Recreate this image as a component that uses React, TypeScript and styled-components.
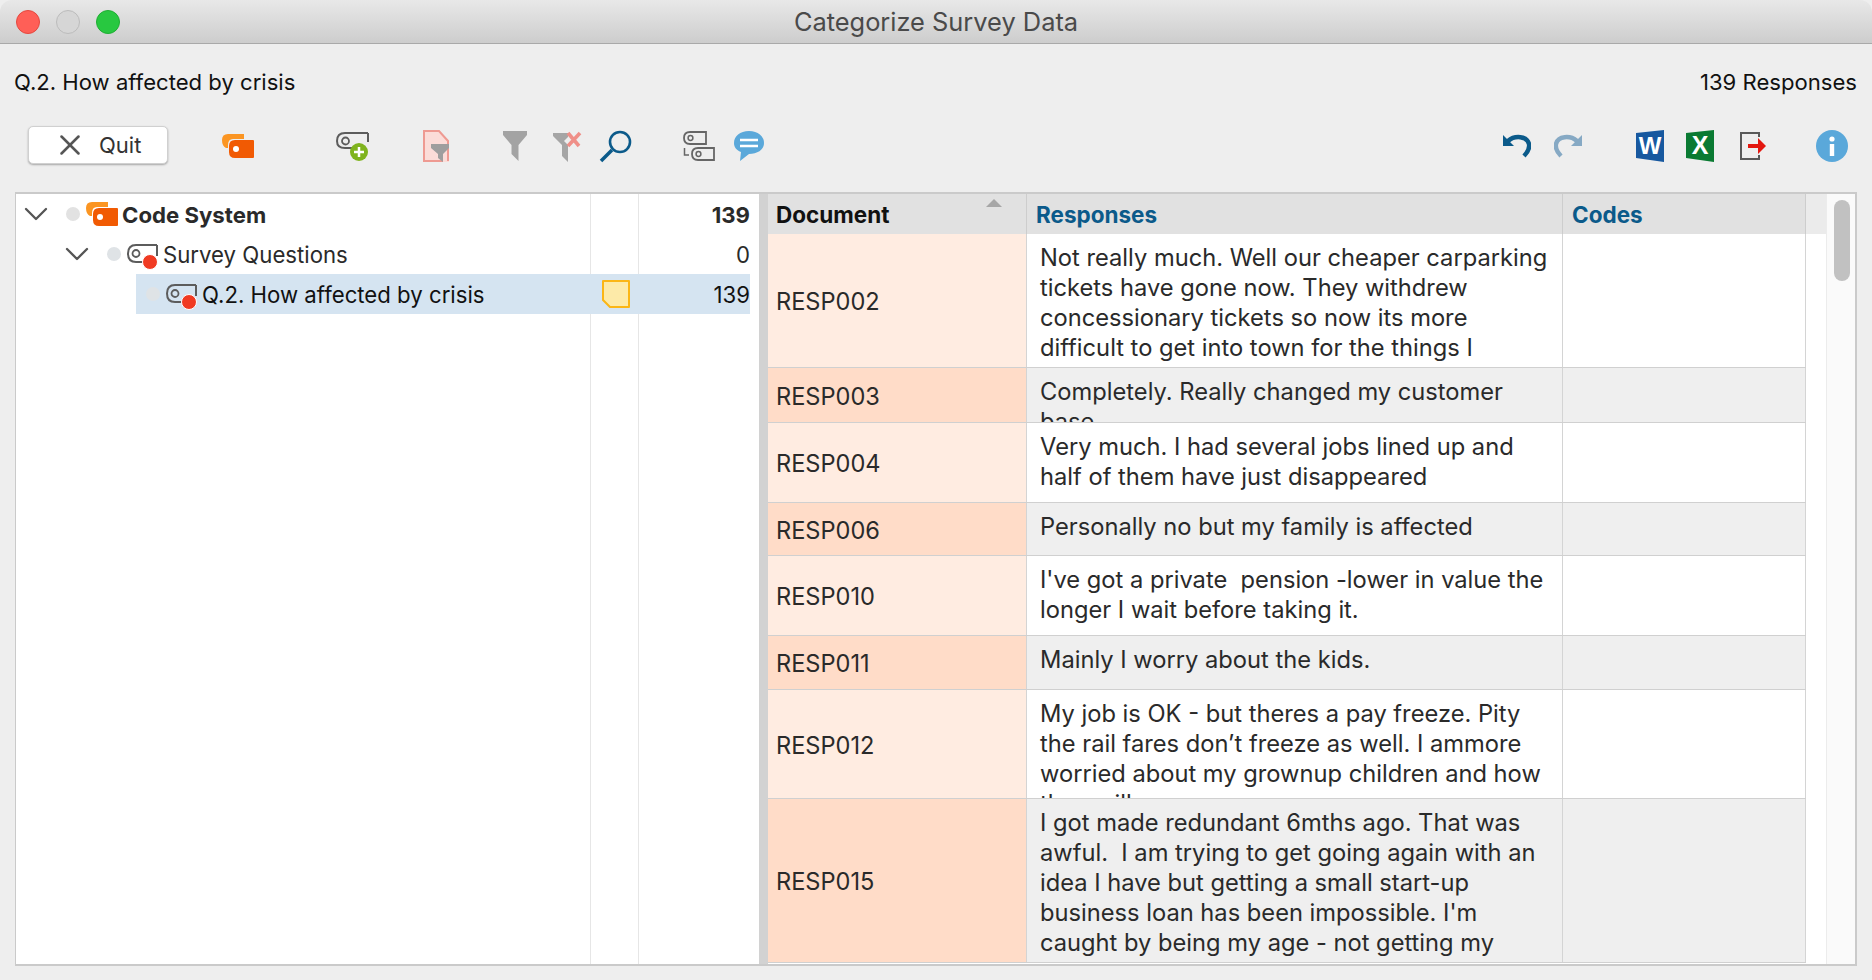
import { ReactNode } from 'react'
import styled, { createGlobalStyle } from 'styled-components'
import { X, ChevronDown } from 'lucide-react'

const GlobalStyle = createGlobalStyle`
    html, body {
        margin: 0;
        padding: 0;
        background: #eeeeee;
        font-family: Inter, "Liberation Sans", sans-serif;
        color: #222222;
    }
`

const Window = styled.div`
    width: 1872px;
    height: 980px;
    overflow: hidden;
    display: flex;
    flex-direction: column;
    background: #eeeeee;
`
const TitleBar = styled.div`
    height: 44px;
    flex: none;
    display: flex;
    align-items: center;
    justify-content: center;
    position: relative;
    box-sizing: border-box;
    background: linear-gradient(#e8e8e8, #cdcdcd);
    border-bottom: 1px solid #a9a9a9;
    border-radius: 12px 12px 0 0;
    font-size: 25.4px;
    color: #4a4a4a;
`
const Lights = styled.div`
    position: absolute;
    left: 16px;
    top: 10px;
    display: flex;
    gap: 16px;
`
const Light = styled.div<{ $color: string; $edge: string }>`
    width: 24px;
    height: 24px;
    border-radius: 50%;
    box-sizing: border-box;
    background: ${(p) => p.$color};
    border: 1px solid ${(p) => p.$edge};
`
const InfoRow = styled.div`
    height: 75px;
    flex: none;
    display: flex;
    align-items: center;
    justify-content: space-between;
    padding: 0 15px 0 14px;
    font-size: 22.1px;
    color: #111111;
`
const Toolbar = styled.div`
    height: 44px;
    margin-top: 4px;
    flex: none;
    display: flex;
    align-items: center;
    padding: 0 24px 0 28px;
`
const QuitButton = styled.button`
    width: 140px;
    height: 38px;
    box-sizing: border-box;
    display: flex;
    align-items: center;
    padding: 0 0 0 24px;
    gap: 12px;
    background: #ffffff;
    border: 1px solid #d0d0d0;
    border-radius: 5px;
    box-shadow: 0 1px 2px rgba(0, 0, 0, 0.3);
    font-family: inherit;
    font-size: 22px;
    color: #333333;
`
const Tool = styled.div<{ $left: number; $width: number }>`
    margin-left: ${(p) => p.$left}px;
    margin-top: 2px;
    width: ${(p) => p.$width}px;
    flex: none;
    display: flex;
    align-items: center;
    justify-content: center;
`
const Spacer = styled.div`
    flex: 1;
`
const Main = styled.div`
    margin: 25px 15px 0;
    height: 774px;
    flex: none;
    display: flex;
    box-sizing: border-box;
    border: 2px solid #cacaca;
    border-left-width: 1px;
    background: #ffffff;
`
const TreePanel = styled.div`
    width: 743px;
    flex: none;
    position: relative;
    background: #ffffff;
    padding-right: 9px;
    box-sizing: border-box;
`
const ColumnRule = styled.div<{ $left: number }>`
    position: absolute;
    top: 0;
    bottom: 0;
    left: ${(p) => p.$left}px;
    width: 1px;
    background: #e6e6e6;
`
const TreeRow = styled.div<{ $indent: number; $selected?: boolean }>`
    margin-left: ${(p) => p.$indent}px;
    padding-left: ${(p) => (p.$selected ? 10 : 0)}px;
    height: 40px;
    display: flex;
    align-items: center;
    position: relative;
    font-size: 22.2px;
    color: ${(p) => (p.$selected ? '#111111' : '#2a2a2a')};
    background: ${(p) => (p.$selected ? '#d5e4f1' : 'transparent')};
`
const Chevron = styled.div`
    width: 24px;
    flex: none;
    color: #555555;
    display: flex;
    justify-content: center;
    margin-right: 18px;

    svg {
        flex: none;
    }
`
const Dot = styled.div<{ $faint?: boolean }>`
    width: 14px;
    height: 14px;
    flex: none;
    border-radius: 50%;
    background: ${(p) => (p.$faint ? '#dfe3e6' : '#e2e2e2')};
    margin-right: 6px;
`
const TreeIcon = styled.div<{ $drop?: boolean }>`
    width: 32px;
    flex: none;
    margin-right: 4px;
    margin-top: ${(p) => (p.$drop ? 6 : 0)}px;
    display: flex;
    align-items: center;
`
const TreeLabel = styled.div<{ $bold?: boolean }>`
    flex: 1;
    white-space: nowrap;
    font-weight: ${(p) => (p.$bold ? 700 : 400)};
`
const MemoCell = styled.div`
    width: 48px;
    flex: none;
    display: flex;
    align-items: center;
    justify-content: center;
    padding-left: 3px;
    box-sizing: border-box;
`
const CountCell = styled.div<{ $bold?: boolean }>`
    width: 112px;
    flex: none;
    text-align: right;
    font-weight: ${(p) => (p.$bold ? 700 : 400)};
`
const Splitter = styled.div`
    width: 9px;
    flex: none;
    background: #d2d2d2;
`
const TableArea = styled.div`
    flex: 1;
    min-width: 0;
    display: flex;
    flex-direction: column;
`
const HeaderRow = styled.div`
    height: 40px;
    flex: none;
    display: grid;
    grid-template-columns: 259px 536px 243px 1fr;
    background: #ebebeb;
`
const HeaderCell = styled.div<{ $link?: boolean }>`
    position: relative;
    display: flex;
    align-items: center;
    padding-left: ${(p) => (p.$link ? 9 : 8)}px;
    background: #e1e1e1;
    border-right: 1px solid #cdcdcd;
    font-size: 22.5px;
    font-weight: 700;
    color: ${(p) => (p.$link ? '#0b5a8a' : '#111111')};
`
const SortArrow = styled.div`
    position: absolute;
    right: 24px;
    top: 5px;
    width: 0;
    height: 0;
    border-left: 8px solid transparent;
    border-right: 8px solid transparent;
    border-bottom: 8px solid #a6a6a6;
`
const DataRow = styled.div<{ $height: number }>`
    height: ${(p) => p.$height}px;
    flex: none;
    display: grid;
    grid-template-columns: 259px 536px 243px;
    width: 1038px;
    box-sizing: border-box;
    border-bottom: 1px solid #d0d0d0;
`
const DocCell = styled.div<{ $alt: boolean }>`
    display: flex;
    align-items: center;
    padding: 2px 0 0 8px;
    font-size: 23.6px;
    color: #2a2a2a;
    background: ${(p) => (p.$alt ? '#ffdcc8' : '#ffece1')};
    border-right: 1px solid #d4d4d4;
`
const TextCell = styled.div<{ $alt: boolean }>`
    overflow: hidden;
    padding: 9px 0 0 13px;
    font-size: 23.7px;
    line-height: 30px;
    color: #2a2a2a;
    background: ${(p) => (p.$alt ? '#efefef' : '#ffffff')};
    border-right: 1px solid #d4d4d4;
`
const TextLine = styled.div`
    white-space: pre;
`
const CodesCell = styled.div<{ $alt: boolean }>`
    background: ${(p) => (p.$alt ? '#efefef' : '#ffffff')};
    border-right: 1px solid #d4d4d4;
`
const ScrollTrack = styled.div`
    width: 29px;
    flex: none;
    background: #fafafa;
    border-left: 1px solid #ececec;
    box-sizing: border-box;
    padding: 6px 5px 0 7px;
`
const ScrollThumb = styled.div`
    height: 81px;
    border-radius: 8px;
    background: #c1c1c1;
`

const CodeTag = () => (
    <svg width="32" height="26" viewBox="0 0 32 26" fill="none">
        <path d="M30 1 H9 Q1 1 1 9.500 Q1 18 9 18 H18" stroke="#5c5c5c" strokeWidth="2" />
        <path d="M30 1 V12" stroke="#5c5c5c" strokeWidth="2" />
        <circle cx="9" cy="9.500" r="3.500" stroke="#5c5c5c" strokeWidth="1.800" />
        <circle cx="23" cy="18" r="7.500" fill="#f03a22" stroke="#ffffff" strokeWidth="1" />
    </svg>
)

const CodeSystemIcon = () => (
    <svg width="32" height="24" viewBox="0 0 32 24">
        <path d="M0 6 Q0 0 6 0 H22 V5 H11 Q6 5 6 11 V14 H4 Q0 12 0 6 Z" fill="#fb9522" />
        <path d="M7 12 Q7 6 13 6 H31 Q32 6 32 7 V23 Q32 24 31 24 H13 Q7 24 7 18 Z" fill="#f15a03" />
        <circle cx="14" cy="15" r="3" fill="#ffffff" />
    </svg>
)

const AddCodeIcon = () => (
    <svg width="33" height="30" viewBox="0 0 33 30" fill="none">
        <path d="M32 2 H9 Q1 2 1 10 Q1 17 9 17 H17" stroke="#5c5c5c" strokeWidth="2" />
        <path d="M32 2 V11" stroke="#5c5c5c" strokeWidth="2" />
        <circle cx="9.500" cy="10" r="3.500" stroke="#5c5c5c" strokeWidth="1.800" />
        <circle cx="23" cy="21" r="9" fill="#7fb31d" />
        <path d="M23 16 V26 M18 21 H28" stroke="#ffffff" strokeWidth="2.500" />
    </svg>
)

const DocFilterIcon = () => (
    <svg width="26" height="32" viewBox="0 0 26 32" fill="none">
        <path d="M1 1 H16 L25 11 V31 H1 Z" fill="#fbdcd8" stroke="#ee9a92" strokeWidth="2" />
        <path d="M8 14 H26 V18 L20 24 V32 L15 28 V24 L8 18 Z" fill="#9e9e9e" />
        <path d="M20 27 H26 V32 H20 Z" fill="#fbdcd8" />
        <path d="M25 25 V31" stroke="#ee9a92" strokeWidth="2" />
    </svg>
)

const FunnelIcon = ({ clear }: { clear?: boolean }) => (
    <svg width={clear ? 29 : 24} height="31" viewBox={clear ? '0 0 29 31' : '0 0 24 31'}>
        {clear ? (
            <>
                <path d="M0 2 H15 V6 L11 10 L15 14 V17 L15 31 L9 25 V14 L0 5 Z" fill="#a5a5a5" />
                <path d="M15 2 L26 15 M27 2 L15 15" stroke="#ef8f88" strokeWidth="3.600" />
            </>
        ) : (
            <path d="M0 0 H24 V4 L15.500 14 V30 L8.500 23 V14 L0 4 Z" fill="#a3a3a3" />
        )}
    </svg>
)

const SearchIcon = () => (
    <svg width="34" height="33" viewBox="0 0 34 33" fill="none">
        <circle cx="21" cy="12" r="10" stroke="#0b5a8a" strokeWidth="2.600" />
        <path d="M13 20 L2 31" stroke="#0b5a8a" strokeWidth="3.600" />
    </svg>
)

const CodeTreeIcon = () => (
    <svg width="32" height="30" viewBox="0 0 32 30" fill="none">
        <path d="M23 1 H7 Q1 1 1 7 Q1 13 7 13 H23 Z" stroke="#666666" strokeWidth="1.800" />
        <circle cx="7.500" cy="7" r="2.400" stroke="#666666" strokeWidth="1.500" />
        <path d="M1.500 17 V24 H6" stroke="#666666" strokeWidth="1.500" />
        <path d="M31 17 H15 Q9 17 9 23 Q9 29 15 29 H31 Z" stroke="#666666" strokeWidth="1.800" />
        <circle cx="15.500" cy="23" r="2.400" stroke="#666666" strokeWidth="1.500" />
    </svg>
)

const BubbleIcon = () => (
    <svg width="30" height="30" viewBox="0 0 30 30">
        <path d="M15 0 C24 0 30 5 30 12 C30 19 23 23 15 23 L6 30 L7 21 C2 19 0 16 0 12 C0 5 6 0 15 0 Z" fill="#5aa8da" />
        <path d="M6 9 H24 M6 15 H24" stroke="#ffffff" strokeWidth="2.600" />
    </svg>
)

const UndoIcon = ({ color, flip }: { color: string; flip?: boolean }) => (
    <svg width="28" height="24" viewBox="0 0 28 24" fill="none" style={flip ? { transform: 'scaleX(-1)' } : undefined}>
        <path d="M0 12 V1 L11 12 Z" fill={color} />
        <path d="M5 7 C12 1 24 2 26 10 C27 15 24 19 21 22" stroke={color} strokeWidth="4.500" />
    </svg>
)

const WordIcon = () => (
    <svg width="28" height="32" viewBox="0 0 28 32">
        <path d="M0 3 L28 0 V32 L0 28 Z" fill="#17589f" />
        <text x="14" y="23.500" textAnchor="middle" fontSize="24" fontWeight="700" fill="#ffffff" fontFamily="Liberation Sans, sans-serif">W</text>
    </svg>
)

const ExcelIcon = () => (
    <svg width="28" height="32" viewBox="0 0 28 32">
        <path d="M0 3 L28 0 V32 L0 28 Z" fill="#0a7a32" />
        <text x="14" y="24" textAnchor="middle" fontSize="25" fontWeight="700" fill="#ffffff" fontFamily="Liberation Sans, sans-serif">X</text>
    </svg>
)

const ExportIcon = () => (
    <svg width="26" height="28" viewBox="0 0 26 28" fill="none">
        <path d="M19 5 V1 H1 V27 H19 V23" stroke="#595959" strokeWidth="2" />
        <path d="M8 12 H18 V6 L26 14 L18 22 V16 H8 Z" fill="#e3170f" />
    </svg>
)

const InfoIcon = () => (
    <svg width="32" height="32" viewBox="0 0 32 32">
        <circle cx="16" cy="16" r="16" fill="#5aa8da" />
        <circle cx="16" cy="9" r="2.600" fill="#ffffff" />
        <rect x="13.800" y="14" width="4.400" height="12" fill="#ffffff" />
    </svg>
)

const MemoIcon = () => (
    <svg width="28" height="28" viewBox="0 0 28 28">
        <path d="M1 1 H27 V27 H8 L1 20 Z" fill="#fdeaa8" stroke="#fbb616" strokeWidth="2" strokeLinejoin="round" />
    </svg>
)

const tools: { left: number; width: number; icon: ReactNode }[] = [
    { left: 54, width: 32, icon: <CodeSystemIcon /> },
    { left: 82, width: 33, icon: <AddCodeIcon /> },
    { left: 54, width: 26, icon: <DocFilterIcon /> },
    { left: 54, width: 24, icon: <FunnelIcon /> },
    { left: 26, width: 29, icon: <FunnelIcon clear /> },
    { left: 17, width: 34, icon: <SearchIcon /> },
    { left: 50, width: 32, icon: <CodeTreeIcon /> },
    { left: 19, width: 30, icon: <BubbleIcon /> },
]

const rightTools: { left: number; width: number; icon: ReactNode }[] = [
    { left: 0, width: 28, icon: <UndoIcon color="#0b5a8a" /> },
    { left: 23, width: 28, icon: <UndoIcon color="#86a9c4" flip /> },
    { left: 54, width: 28, icon: <WordIcon /> },
    { left: 22, width: 28, icon: <ExcelIcon /> },
    { left: 26, width: 26, icon: <ExportIcon /> },
    { left: 50, width: 32, icon: <InfoIcon /> },
]

const rows = [
    {
        doc: 'RESP002',
        height: 134,
        lines: [
            'Not really much. Well our cheaper carparking',
            'tickets have gone now. They withdrew',
            'concessionary tickets so now its more',
            'difficult to get into town for the things I',
            'need.',
        ],
    },
    { doc: 'RESP003', height: 55, lines: ['Completely. Really changed my customer', 'base'] },
    { doc: 'RESP004', height: 80, lines: ['Very much. I had several jobs lined up and', 'half of them have just disappeared'] },
    { doc: 'RESP006', height: 53, lines: ['Personally no but my family is affected'] },
    { doc: 'RESP010', height: 80, lines: ["I've got a private  pension -lower in value the", 'longer I wait before taking it.'] },
    { doc: 'RESP011', height: 54, lines: ['Mainly I worry about the kids.'] },
    {
        doc: 'RESP012',
        height: 109,
        lines: [
            'My job is OK - but theres a pay freeze. Pity',
            'the rail fares don’t freeze as well. I ammore',
            'worried about my grownup children and how',
            'they will',
        ],
    },
    {
        doc: 'RESP015',
        height: 164,
        lines: [
            'I got made redundant 6mths ago. That was',
            'awful.  I am trying to get going again with an',
            'idea I have but getting a small start-up',
            "business loan has been impossible. I'm",
            'caught by being my age - not getting my',
        ],
    },
]

const App = () => {
    return (
        <Window>
            <GlobalStyle />
            <TitleBar>
                <Lights>
                    <Light $color="#ff5f57" $edge="#e5483f" />
                    <Light $color="#d6d6d6" $edge="#bcbcbc" />
                    <Light $color="#28c840" $edge="#1fae33" />
                </Lights>
                Categorize Survey Data
            </TitleBar>
            <InfoRow>
                <span>Q.2. How affected by crisis</span>
                <span>139 Responses</span>
            </InfoRow>
            <Toolbar>
                <QuitButton>
                    <X size={34} strokeWidth={1.8} color="#555555" />
                    Quit
                </QuitButton>
                {tools.map((tool, index) => (
                    <Tool key={index} $left={tool.left} $width={tool.width}>{tool.icon}</Tool>
                ))}
                <Spacer />
                {rightTools.map((tool, index) => (
                    <Tool key={index} $left={tool.left} $width={tool.width}>{tool.icon}</Tool>
                ))}
            </Toolbar>
            <Main>
                <TreePanel>
                    <ColumnRule $left={574} />
                    <ColumnRule $left={622} />
                    <TreeRow $indent={8}>
                        <Chevron><ChevronDown size={40} strokeWidth={1.4} /></Chevron>
                        <Dot />
                        <TreeIcon><CodeSystemIcon /></TreeIcon>
                        <TreeLabel $bold>Code System</TreeLabel>
                        <MemoCell />
                        <CountCell $bold>139</CountCell>
                    </TreeRow>
                    <TreeRow $indent={49}>
                        <Chevron><ChevronDown size={40} strokeWidth={1.4} /></Chevron>
                        <Dot $faint />
                        <TreeIcon $drop><CodeTag /></TreeIcon>
                        <TreeLabel>Survey Questions</TreeLabel>
                        <MemoCell />
                        <CountCell>0</CountCell>
                    </TreeRow>
                    <TreeRow $indent={120} $selected>
                        <Dot $faint />
                        <TreeIcon $drop><CodeTag /></TreeIcon>
                        <TreeLabel>Q.2. How affected by crisis</TreeLabel>
                        <MemoCell><MemoIcon /></MemoCell>
                        <CountCell>139</CountCell>
                    </TreeRow>
                </TreePanel>
                <Splitter />
                <TableArea>
                    <HeaderRow>
                        <HeaderCell>Document<SortArrow /></HeaderCell>
                        <HeaderCell $link>Responses</HeaderCell>
                        <HeaderCell $link>Codes</HeaderCell>
                    </HeaderRow>
                    {rows.map((row, index) => (
                        <DataRow key={row.doc} $height={row.height}>
                            <DocCell $alt={index % 2 === 1}>{row.doc}</DocCell>
                            <TextCell $alt={index % 2 === 1}>
                                {row.lines.map((line) => (
                                    <TextLine key={line}>{line}</TextLine>
                                ))}
                            </TextCell>
                            <CodesCell $alt={index % 2 === 1} />
                        </DataRow>
                    ))}
                </TableArea>
                <ScrollTrack>
                    <ScrollThumb />
                </ScrollTrack>
            </Main>
        </Window>
    )
}

export default App
